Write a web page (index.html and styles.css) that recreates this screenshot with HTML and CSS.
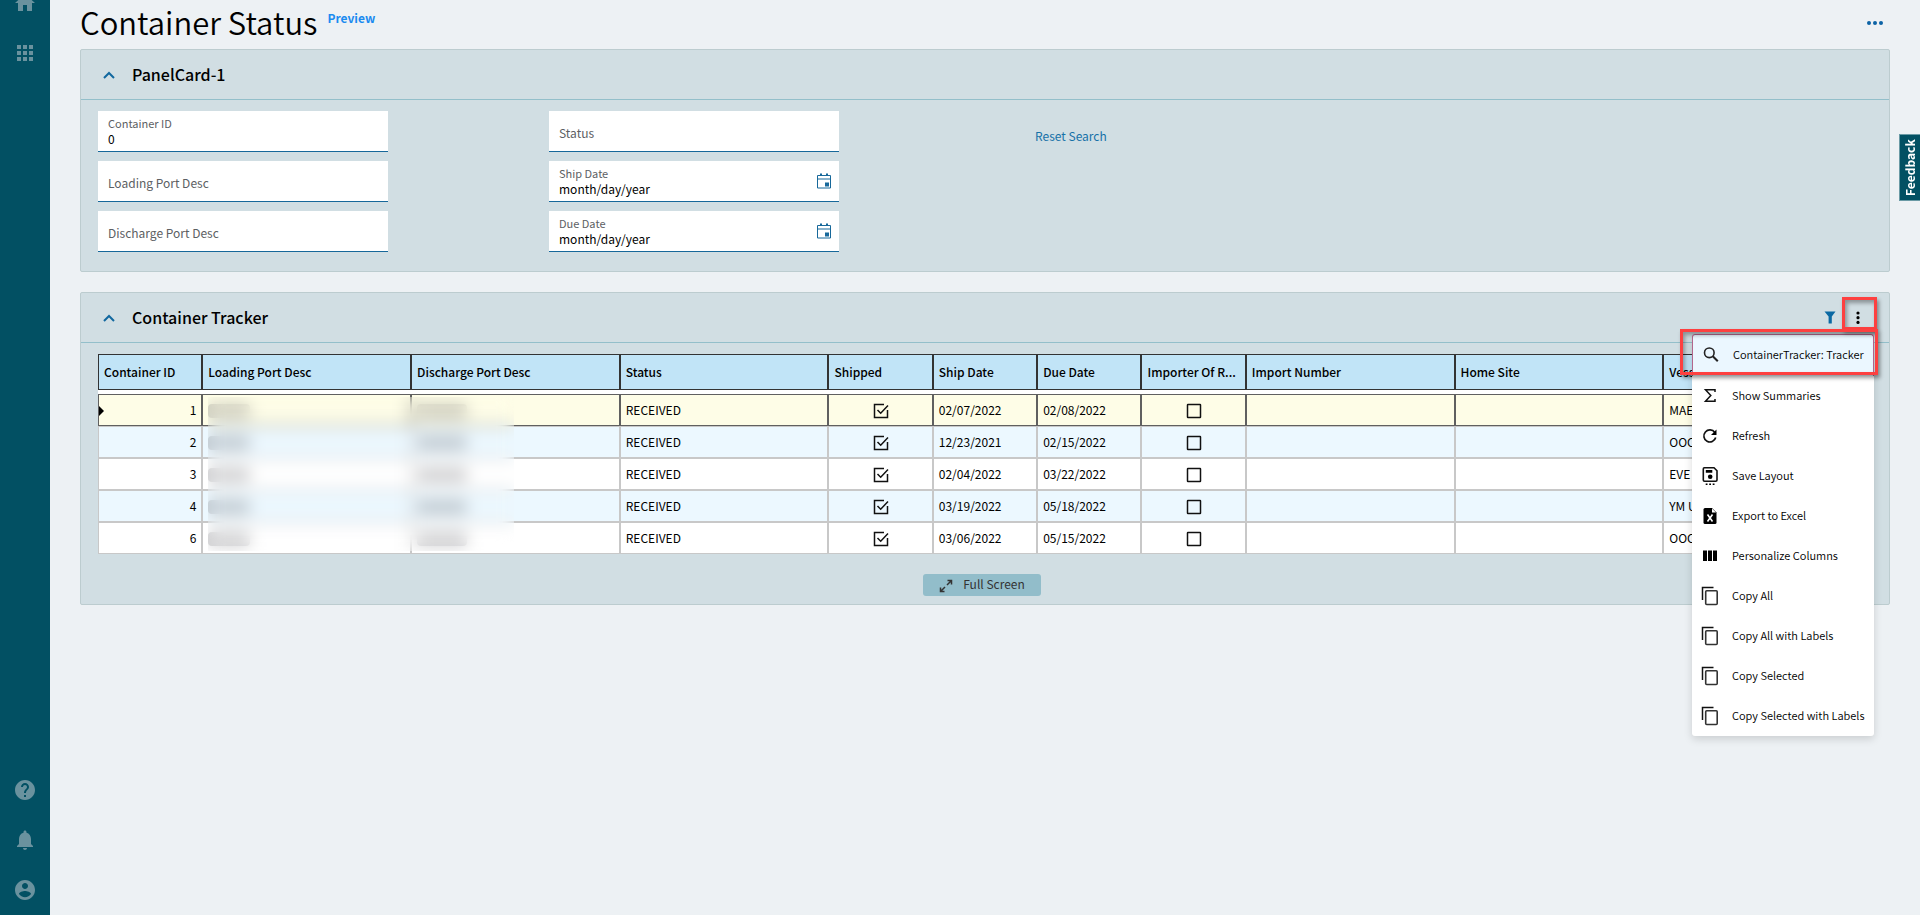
FILE: index.html
```html
<!DOCTYPE html>
<html lang="en">
<head>
<meta charset="utf-8">
<title>Container Status</title>
<link rel="stylesheet" href="styles.css">
</head>
<body>
<svg class="sprite" aria-hidden="true">
  <symbol id="i-chevron" viewBox="0 0 12 8"><path d="M1 7l5-5 5 5" fill="none" stroke="currentColor" stroke-width="2"/></symbol>
  <symbol id="i-calendar" viewBox="0 0 14 16"><path d="M.5 2.500h13v12.500H.5zM.5 6h13" fill="none" stroke="currentColor"/><path d="M3 .5h2v2.500H3zM9 .5h2v2.500H9zM8 9.500h4v4H8z" fill="currentColor"/></symbol>
  <symbol id="i-copy" viewBox="0 0 18 20"><path d="M1.500 14V1.500H12.500" fill="none" stroke="#111" stroke-width="1.500"/><rect x="4.700" y="4.700" width="11.500" height="13.800" rx="1" fill="none" stroke="#333" stroke-width="1.600"/></symbol>
</svg>
<div class="app">
  <nav class="rail" aria-label="Main">
    <div class="rail-group rail-top">
      <button class="rail-btn" aria-label="Home"><svg viewBox="0 0 24 24"><path d="M10 20v-6h4v6h5v-8h3L12 3 2 12h3v8z"/></svg></button>
      <button class="rail-btn" aria-label="Apps"><svg viewBox="0 0 24 24"><path d="M4 8h4V4H4v4zm6 12h4v-4h-4v4zm-6 0h4v-4H4v4zm0-6h4v-4H4v4zm6 0h4v-4h-4v4zm6-10v4h4V4h-4zm-6 4h4V4h-4v4zm6 6h4v-4h-4v4zm0 6h4v-4h-4v4z"/></svg></button>
    </div>
    <div class="rail-group">
      <button class="rail-btn" aria-label="Help"><svg viewBox="0 0 24 24"><path d="M12 2C6.480 2 2 6.480 2 12s4.480 10 10 10 10-4.480 10-10S17.520 2 12 2zm1 17h-2v-2h2v2zm2.070-7.750l-.9.920C13.450 12.900 13 13.500 13 15h-2v-.5c0-1.100.45-2.100 1.170-2.830l1.240-1.260c.37-.36.590-.86.590-1.410 0-1.100-.9-2-2-2s-2 .9-2 2H8c0-2.210 1.790-4 4-4s4 1.790 4 4c0 .88-.36 1.680-.93 2.250z"/></svg></button>
      <button class="rail-btn" aria-label="Notifications"><svg viewBox="0 0 24 24"><path d="M12 22c1.100 0 2-.9 2-2h-4c0 1.100.9 2 2 2zm6-6v-5c0-3.070-1.630-5.640-4.500-6.320V4c0-.83-.67-1.500-1.500-1.500s-1.500.67-1.500 1.500v.68C7.640 5.360 6 7.920 6 11v5l-2 2v1h16v-1l-2-2z"/></svg></button>
      <button class="rail-btn" aria-label="Account"><svg viewBox="0 0 24 24"><path d="M12 2C6.480 2 2 6.480 2 12s4.480 10 10 10 10-4.480 10-10S17.520 2 12 2zm0 3c1.660 0 3 1.340 3 3s-1.340 3-3 3-3-1.340-3-3 1.340-3 3-3zm0 14.200c-2.500 0-4.710-1.280-6-3.220.03-1.990 4-3.080 6-3.080 1.990 0 5.970 1.090 6 3.080-1.290 1.940-3.500 3.220-6 3.220z"/></svg></button>
    </div>
  </nav>

  <main class="page">
    <header class="page-head">
      <h1>Container Status</h1>
      <span class="preview">Preview</span>
      <button class="more" aria-label="More actions"><svg viewBox="0 0 16 4"><circle cx="2" cy="2" r="2"/><circle cx="8" cy="2" r="2"/><circle cx="14" cy="2" r="2"/></svg></button>
    </header>

    <section class="panel">
      <div class="panel-head">
        <button class="collapse" aria-label="Collapse"><svg><use href="#i-chevron"/></svg></button>
        <h2>PanelCard-1</h2>
      </div>
      <div class="search-grid">
        <div class="search-col">
          <div class="field"><label for="cid">Container ID</label><input id="cid" type="text" value="0"></div>
          <div class="field empty"><label for="lpd">Loading Port Desc</label><input id="lpd" type="text"></div>
          <div class="field empty"><label for="dpd">Discharge Port Desc</label><input id="dpd" type="text"></div>
        </div>
        <div class="search-col">
          <div class="field empty"><label for="st">Status</label><input id="st" type="text"></div>
          <div class="field date"><label for="sd">Ship Date</label><input id="sd" type="text" value="month/day/year"><button class="cal" aria-label="Pick ship date"><svg><use href="#i-calendar"/></svg></button></div>
          <div class="field date"><label for="dd">Due Date</label><input id="dd" type="text" value="month/day/year"><button class="cal" aria-label="Pick due date"><svg><use href="#i-calendar"/></svg></button></div>
        </div>
        <div class="search-col">
          <a class="reset" href="#">Reset Search</a>
        </div>
      </div>
    </section>

    <section class="panel">
      <div class="panel-head">
        <button class="collapse" aria-label="Collapse"><svg><use href="#i-chevron"/></svg></button>
        <h2>Container Tracker</h2>
        <div class="tools">
          <button class="tool filter" aria-label="Filter"><svg viewBox="0 0 12 13"><path d="M.5.500h11L7.800 5.500V12.500H4.600V5.500z" fill="#0b69a3"/></svg></button>
          <button class="tool" aria-label="Table menu"><svg viewBox="0 0 12 13"><circle cx="6" cy="2" r="1.600"/><circle cx="6" cy="6.700" r="1.600"/><circle cx="6" cy="11.400" r="1.600"/></svg></button>
        </div>
      </div>
      <div class="grid-area">
        <div class="grid-wrap">
          <table class="grid">
            <colgroup>
              <col class="c1"><col class="c2"><col class="c2"><col class="c2"><col class="c1"><col class="c1"><col class="c1"><col class="c1"><col class="c2"><col class="c2"><col class="c2">
            </colgroup>
            <thead>
              <tr><th>Container ID</th><th>Loading Port Desc</th><th>Discharge Port Desc</th><th>Status</th><th>Shipped</th><th>Ship Date</th><th>Due Date</th><th>Importer Of R...</th><th>Import Number</th><th>Home Site</th><th>Vessel</th></tr>
            </thead>
            <tbody>
              <tr class="current"><td class="num">1</td><td><i class="smudge"></i></td><td><i class="smudge wide"></i></td><td>RECEIVED</td><td class="mid"><input type="checkbox" aria-label="Shipped" checked></td><td>02/07/2022</td><td>02/08/2022</td><td class="mid"><input type="checkbox" aria-label="Importer Of Record"></td><td></td><td></td><td>MAE</td></tr>
              <tr><td class="num">2</td><td><i class="smudge"></i></td><td><i class="smudge wide"></i></td><td>RECEIVED</td><td class="mid"><input type="checkbox" aria-label="Shipped" checked></td><td>12/23/2021</td><td>02/15/2022</td><td class="mid"><input type="checkbox" aria-label="Importer Of Record"></td><td></td><td></td><td>OOC</td></tr>
              <tr><td class="num">3</td><td><i class="smudge"></i></td><td><i class="smudge wide"></i></td><td>RECEIVED</td><td class="mid"><input type="checkbox" aria-label="Shipped" checked></td><td>02/04/2022</td><td>03/22/2022</td><td class="mid"><input type="checkbox" aria-label="Importer Of Record"></td><td></td><td></td><td>EVE</td></tr>
              <tr><td class="num">4</td><td><i class="smudge"></i></td><td><i class="smudge wide"></i></td><td>RECEIVED</td><td class="mid"><input type="checkbox" aria-label="Shipped" checked></td><td>03/19/2022</td><td>05/18/2022</td><td class="mid"><input type="checkbox" aria-label="Importer Of Record"></td><td></td><td></td><td>YM U</td></tr>
              <tr><td class="num">6</td><td><i class="smudge"></i></td><td><i class="smudge wide"></i></td><td>RECEIVED</td><td class="mid"><input type="checkbox" aria-label="Shipped" checked></td><td>03/06/2022</td><td>05/15/2022</td><td class="mid"><input type="checkbox" aria-label="Importer Of Record"></td><td></td><td></td><td>OOC</td></tr>
            </tbody>
          </table>
          <div class="frost"></div>
        </div>
        <div class="grid-foot">
          <button class="full"><svg viewBox="0 0 14 14"><path d="M8 6l4-4M8.500 1.500H12.500V5.500M6 8l-4 4M1.500 8.500V12.500H5.500" fill="none" stroke="currentColor" stroke-width="1.500"/></svg>Full Screen</button>
        </div>
      </div>

      <div class="menu" role="menu">
        <button class="item active" role="menuitem"><svg viewBox="0 0 18 20"><circle cx="7.300" cy="7.800" r="4.800" fill="none" stroke="#222" stroke-width="1.600"/><path d="M10.800 11.300l5 5" stroke="#222" stroke-width="2"/></svg>ContainerTracker: Tracker</button>
        <button class="item" role="menuitem"><svg viewBox="0 0 18 20"><path d="M14 6V3.800H4.500L9.800 9.500l-5.300 5.700H14V13" fill="none" stroke="#111" stroke-width="1.500"/></svg>Show Summaries</button>
        <button class="item" role="menuitem"><svg viewBox="0 0 18 20"><path d="M13.800 6.500A6 6 0 1 0 14.700 11.500" fill="none" stroke="#111" stroke-width="1.700"/><path d="M15.500 3.500V9H10z"/></svg>Refresh</button>
        <button class="item" role="menuitem"><svg viewBox="0 0 18 20"><path d="M3.300 1.800H13L16 4.800V14Q16 15.200 14.700 15.200H3.500Q2.300 15.200 2.300 14V3Q2.300 1.800 3.300 1.800z" fill="none" stroke="#111" stroke-width="1.600"/><path d="M4.800 4h6.500v2.800H4.800zM4.700 17.500h1.800v1.500H4.700zM8.200 17.500H10v1.500H8.200zM11.700 17.500h1.800v1.500h-1.800z"/><circle cx="9.200" cy="10.700" r="2.300"/></svg>Save Layout</button>
        <button class="item" role="menuitem"><svg viewBox="0 0 18 20"><path d="M4 2H11L15.500 6.500V16.500Q15.500 18 14 18H4Q2.500 18 2.500 16.500V3.500Q2.500 2 4 2z"/><path d="M11 2.500V6.500H15z" fill="#fff"/><path d="M6.500 8.500l5 7M11.500 8.500l-5 7" stroke="#fff" stroke-width="1.600"/></svg>Export to Excel</button>
        <button class="item" role="menuitem"><svg viewBox="0 0 18 20"><path d="M2 4.500h4v10.500H2zM7 4.500h4v10.500H7zM12 4.500h4v10.500h-4z"/></svg>Personalize Columns</button>
        <button class="item" role="menuitem"><svg><use href="#i-copy"/></svg>Copy All</button>
        <button class="item" role="menuitem"><svg><use href="#i-copy"/></svg>Copy All with Labels</button>
        <button class="item" role="menuitem"><svg><use href="#i-copy"/></svg>Copy Selected</button>
        <button class="item" role="menuitem"><svg><use href="#i-copy"/></svg>Copy Selected with Labels</button>
      </div>
      <div class="callout callout-kebab"></div>
      <div class="callout callout-item"></div>
    </section>
  </main>
  <button class="feedback">Feedback</button>
</div>
</body>
</html>
```
FILE: styles.css
```css
* { box-sizing: border-box; }
body {
  margin: 0;
  background: #edf1f4;
  color: #000;
  font: 12px/16px "Noto Sans CJK SC", "Noto Sans", sans-serif;
}
button, input { font: inherit; color: inherit; background: none; border: 0; padding: 0; margin: 0; }
button { cursor: pointer; }
.sprite { display: none; }
.app { display: flex; min-height: 100vh; overflow: hidden; }

.rail {
  flex: none;
  width: 50px;
  background: #025063;
  display: flex;
  flex-direction: column;
  justify-content: space-between;
}
.rail-group { display: flex; flex-direction: column; }
.rail-top { margin-top: -22px; }
.rail-btn { height: 50px; display: flex; align-items: center; justify-content: center; }
.rail-btn svg { width: 24px; height: 24px; fill: #6a929e; }

.page { flex: 1; min-width: 0; padding: 0 30px; }
.page-head { display: flex; align-items: center; height: 49px; }
h1 { margin: 0 0 6px; font-size: 31px; line-height: 42px; font-weight: 350; }
.preview { margin: 0 0 14px 10px; color: #1b8bf0; font-weight: 700; }
.more { margin-left: auto; padding: 4px 7px 8px; }
.more svg { display: block; width: 16px; height: 4px; fill: #0b63a5; }

.panel {
  position: relative;
  background: #d1dee3;
  border: 1px solid #bccccf;
  border-radius: 2px;
  margin-bottom: 20px;
}
.panel-head {
  display: flex;
  align-items: center;
  height: 50px;
  padding: 0 17px 0 22px;
  border-bottom: 1px solid #93bfca;
}
.collapse { width: 12px; height: 8px; color: #12689f; }
.collapse svg { display: block; width: 12px; height: 8px; }
h2 { margin: 0 0 2px 17px; font-size: 16px; line-height: 24px; font-weight: 500; }

.search-grid {
  display: grid;
  grid-template-columns: repeat(4, 1fr);
  padding: 11px 2px 19px;
}
.search-col { display: flex; flex-direction: column; gap: 9px; padding: 0 15px; }
.field {
  display: grid;
  grid-template-rows: 16px 16px;
  max-width: 290px;
  height: 41px;
  padding: 4px 10px;
  background: #fff;
  border-bottom: 1px solid #17689a;
}
.field label { color: #5c6063; font-size: 11px; }
.field input { width: 100%; height: 16px; outline: 0; }
.field.empty { grid-template-rows: 32px; }
.field.empty label { grid-area: 1 / 1; font-size: 12px; line-height: 36px; }
.field.empty input { grid-area: 1 / 1; height: 32px; }
.field.date { grid-template-columns: 1fr 14px; padding-right: 8px; }
.cal { grid-area: 1 / 2 / 3 / 3; align-self: center; color: #17689a; }
.cal svg { display: block; width: 14px; height: 16px; }
.reset { margin: 17px 35px; color: #1771a8; text-decoration: none; }

.tools { display: flex; margin-left: auto; }
.tool { width: 28px; height: 28px; display: flex; align-items: center; justify-content: center; }
.tool svg { width: 12px; height: 13px; }

.grid-area { padding: 11px 17px 8px; }
.grid-wrap { position: relative; }
.grid {
  width: 100%;
  table-layout: fixed;
  border-collapse: separate;
  border-spacing: 0;
  background: #fff;
}
.c1 { width: 100px; }
.c2 { width: 200px; }
.grid th, .grid td {
  padding: 0 5px;
  text-align: left;
  white-space: nowrap;
}
.grid th { height: 36px; background: #c1e4f7; border: 1px solid #333; font-weight: 500; }
.grid tbody::before { content: ""; display: block; height: 4px; }
.grid td { height: 32px; border: 1px solid #c8c8c8; }
.grid tr:nth-child(even) td { background: #ecf8ff; }
.grid .current td { background: #fefde7; border-color: #606060; }
.grid td.num { text-align: right; }
.grid td.mid { text-align: center; }
.current .num { position: relative; }
.current .num::before {
  content: "";
  position: absolute;
  left: 0;
  top: 11px;
  border: 5px solid transparent;
  border-left-color: #000;
  border-right-width: 0;
}
.grid input {
  appearance: none;
  display: inline-block;
  width: 16px;
  height: 16px;
  vertical-align: middle;
  background: center / 16px 16px url("data:image/svg+xml,%3Csvg xmlns='http://www.w3.org/2000/svg' viewBox='0 0 16 16'%3E%3Crect x='1.500' y='1.500' width='13' height='13' rx='.5' fill='none' stroke='%23111' stroke-width='1.500'/%3E%3C/svg%3E");
}
.grid input:checked {
  background-image: url("data:image/svg+xml,%3Csvg xmlns='http://www.w3.org/2000/svg' viewBox='0 0 16 16'%3E%3Cpath d='M11 1.500H1.500v13h13V7M4.500 7l3.200 3.200L15 2.500' fill='none' stroke='%23111' stroke-width='1.500'/%3E%3C/svg%3E");
}
.smudge { display: block; width: 42px; height: 14px; margin-top: 2px; border-radius: 4px; background: rgba(60, 60, 70, .26); }
.smudge.wide { width: 50px; }
.frost {
  position: absolute;
  left: 110px;
  top: 43px;
  width: 306px;
  height: 154px;
  backdrop-filter: blur(8px);
}

.grid-foot { display: flex; justify-content: center; padding: 20px 6px 0 0; }
.full {
  display: flex;
  align-items: center;
  gap: 10px;
  height: 22px;
  padding: 0 16px 2px;
  border-radius: 3px;
  background: #92bdca;
  color: #333;
}
.full svg { width: 14px; height: 14px; margin-top: 4px; }

.menu {
  position: absolute;
  top: 41px;
  right: 15px;
  width: 182px;
  background: #fff;
  border-radius: 3px;
  box-shadow: 0 3px 8px rgba(0, 0, 0, .15);
}
.item {
  display: flex;
  align-items: center;
  gap: 13px;
  width: 100%;
  height: 40px;
  padding: 0 9px 2px;
  font-size: 11px;
  font-weight: 350;
  white-space: nowrap;
}
.item svg { flex: none; width: 18px; height: 20px; margin-top: 2px; }
.item.active { height: 42px; padding-bottom: 3px; background: #ebf7ff; border: 1px solid #b3668c; border-bottom: 0; border-radius: 3px 3px 0 0; }

.callout {
  position: absolute;
  border: 3px solid #fd4040;
  box-shadow: 2px 3px 4px rgba(0, 0, 0, .4), inset 2px 3px 4px rgba(0, 0, 0, .35);
  pointer-events: none;
}
.callout-item { top: 36px; right: 11px; width: 198px; height: 46px; }
.callout-kebab { top: 4px; right: 12px; width: 35px; height: 33px; }

.feedback {
  position: fixed;
  top: 134px;
  right: 0;
  width: 21px;
  height: 67px;
  writing-mode: vertical-rl;
  transform: rotate(180deg);
  background: #025063;
  border: 1px solid #6a9aa5;
  border-left: 0;
  color: #fff;
  font-weight: 700;
  line-height: 18px;
}
```
